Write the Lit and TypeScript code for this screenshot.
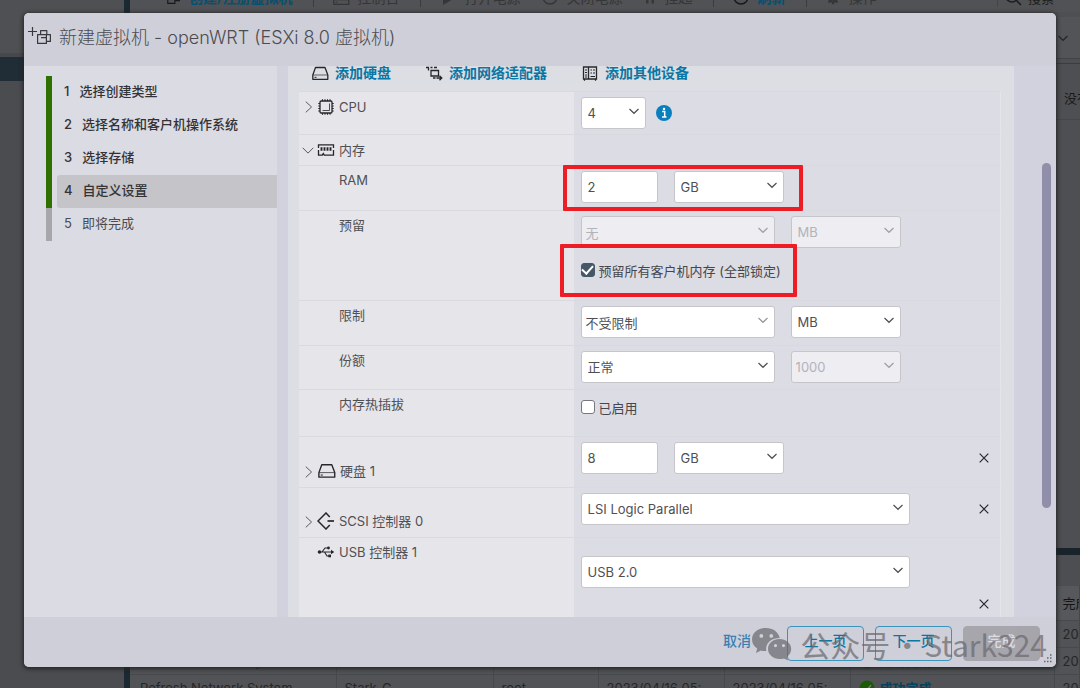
import { LitElement, html, css, svg, nothing } from "lit";
import { customElement, property } from "lit/decorators.js";
import { classMap } from "lit/directives/class-map.js";

const icons: Record<string, unknown> = {
  disk: svg`<path d="M4.5 3.5h9.5l2.800 7.500v4.300h-15V11z" fill="none" stroke="currentColor" stroke-width="1.300" stroke-linejoin="round"/><path d="M2 11h14.500" stroke="currentColor" stroke-width=".7"/><path d="M3.500 13.300h2" stroke="currentColor" stroke-width="1"/>`,
  network: svg`<path d="M1 3.500h3M5.500 3.500h2M9 3.500h3M6 6.500h7.500v5.500H6zM3.500 3.500v3M8 14h2.500M11.500 14h5M14.500 11.800l2.300 2.200-2.300 2.200" fill="none" stroke="currentColor" stroke-width="1.300"/>`,
  device: svg`<path d="M2.500 3h13v12h-13zM7.500 3v12" fill="none" stroke="currentColor" stroke-width="1.300"/><path d="M4 6h2M4 8.500h2M4 11h2M4 13h2M9.500 6h1.500M12 6h2M9.500 9h1.500M12 9h2M9.500 12.500h4.500M3.500 15v1.800M14.500 15v1.800" stroke="currentColor" stroke-width="1.200"/>`,
  cpu: svg`<rect x="3" y="3" width="12" height="12" rx="1.200" fill="none" stroke="currentColor" stroke-width="1.300"/><path d="M5.500 12.500h7v-7" fill="none" stroke="currentColor" stroke-width=".8"/><path d="M5.500 1.300V3M8 1.300V3M10.500 1.300V3M13 1.300V3M5.500 15v1.700M8 15v1.700M10.500 15v1.700M13 15v1.700M1.300 5.500H3M1.300 8H3M1.300 10.500H3M1.300 13H3M15 5.500h1.700M15 8h1.700M15 10.500h1.700M15 13h1.700" stroke="currentColor" stroke-width="1.100"/>`,
  memory: svg`<path d="M1.500 7V3.800h15V7M1.500 9v5.200h3.800l1-1.600 1 1.600h9.200V9" fill="none" stroke="currentColor" stroke-width="1.300"/><path d="M4.500 6.200v3.600M7.500 6.200v3.600M10.500 6.200v3.600M13.500 6.200v3.600" stroke="currentColor" stroke-width="1.900"/>`,
  scsi: svg`<path d="M12.800 5L9 1 1 9l8 8 3.800-4" fill="none" stroke="currentColor" stroke-width="1.500"/><path d="M10.500 9H17" stroke="currentColor" stroke-width="1.700"/>`,
  usb: svg`<circle cx="2.500" cy="9" r="1.800" fill="currentColor"/><path d="M2.500 9h12M5 9l3-4h3M7.500 9l2.500 4h2" fill="none" stroke="currentColor" stroke-width="1.100"/><path d="M14 6.800L17.300 9 14 11.200z" fill="currentColor"/><circle cx="11.500" cy="5" r="1.400" fill="currentColor"/><path d="M11.300 11.600h2.700v2.700h-2.700z" fill="currentColor"/>`,
  vm: svg`<path d="M2 6h8v9H2zM6 9V3h9v9H10M10 9h2" fill="none" stroke="currentColor" stroke-width="1.300"/>`,
  close: svg`<path d="M4.700 4.700l8.600 8.600M13.300 4.700l-8.600 8.600" stroke="currentColor" stroke-width="1.200"/>`,
  down: svg`<path d="M4.500 7l4.500 4.300L13.500 7" fill="none" stroke="currentColor" stroke-width="1.200"/>`,
  expand: svg`<path d="M6.500 3L13 9l-6.500 6" fill="none" stroke="currentColor" stroke-width="1.100"/>`,
  collapse: svg`<path d="M3 6.500L9 12.500l6-6" fill="none" stroke="currentColor" stroke-width="1.100"/>`,
  info: svg`<circle cx="9" cy="9" r="8" fill="#0a7fbe"/><path d="M7.200 7.600h2.500v5M7 13h4.500" fill="none" stroke="#fff" stroke-width="1.500"/><circle cx="9" cy="4.900" r="1.200" fill="#fff"/>`,
  refresh: svg`<path d="M2 8a7 7 0 0 0 14 0" fill="none" stroke="currentColor" stroke-width="1.500"/>`,
  gear: svg`<circle cx="9" cy="9" r="4" fill="none" stroke="currentColor" stroke-width="3"/><path d="M9 2v3M9 13v3M2 9h3M13 9h3M4 4l2 2M12 12l2 2M14 4l-2 2M6 12l-2 2" stroke="currentColor" stroke-width="2.400"/>`,
  search: svg`<circle cx="8" cy="7" r="6" fill="none" stroke="currentColor" stroke-width="1.600"/><path d="M12.500 11.500L17 16" stroke="currentColor" stroke-width="1.600"/>`,
  play: svg`<path d="M4 2l12 7-12 7z" fill="currentColor"/>`,
  pause: svg`<path d="M4 2h3v14H4zM11 2h3v14h-3z" fill="currentColor"/>`,
  ok: svg`<circle cx="9" cy="9" r="8.500" fill="#1d5a08"/><path d="M4.500 9.500l3 3 6-6.500" fill="none" stroke="#77797b" stroke-width="1.700"/>`,
};

const icon = (name: string, size = 18, cls = "") =>
  html`<svg class=${cls} width=${size} height=${size} viewBox="0 0 18 18" aria-hidden="true">${icons[name]}</svg>`;

const shared = css`
  * { box-sizing: border-box; }
  svg { display: block; flex: none; }
  button { font: inherit; color: inherit; background: none; border: 0; padding: 0; cursor: pointer; }
  a { color: inherit; text-decoration: none; }
`;

@customElement("host-client")
class HostClient extends LitElement {
  static styles = [shared, css`
    :host { display: flex; height: 100%; overflow: hidden; background: #4e4f52; color: #252628; font-size: 13px; line-height: 18px; white-space: nowrap; }
    .nav { flex: none; width: 130px; border-right: 6px solid #1b2932; background: #4b4c50; }
    .nav-head { height: 57px; background: #4f5053; border-bottom: 4px solid #47484b; }
    .nav-active { height: 24px; background: #202c36; }
    .main { flex: 1; min-width: 0; display: flex; flex-direction: column; }
    .bar { display: flex; align-items: center; height: 28px; margin-top: -16px; padding-left: 36px; background: #515255; font-size: 14px; }
    .tool { display: flex; align-items: center; gap: 7px; padding-right: 21px; }
    .tool.lined { border-right: 1px solid #3a3b3d; margin-right: 18px; }
    .tool.blue { color: #07506f; font-weight: 700; }
    .tool.blue svg { color: #18191b; }
    .tool.off { color: #353638; }
    .find { margin-left: auto; width: 83px; padding-left: 6px; display: flex; align-items: center; gap: 6px; color: #1d1e20; border-left: 1px solid #444547; font-size: 13px; }
    .crumbs { height: 42px; margin-top: 5px; display: flex; justify-content: flex-end; align-items: center; padding-right: 8px; border-bottom: 1px solid #424346; background: #535457; }
    .notice { margin-top: 4px; height: 57px; text-align: right; padding: 25px 0 0; border-top: 1px solid #3b3c3f; border-bottom: 1px solid #46474a; overflow: hidden; }
    .notice span { display: block; width: 16px; margin-left: auto; color: #18191a; }
    .body { flex: 1; }
    .tasks-head { height: 38px; border-top: 7px solid #18232b; background: #4d4e51; }
    .tasks { width: 100%; border-collapse: collapse; table-layout: fixed; margin-bottom: -14px; }
    .tasks td, .tasks th { height: 27px; padding: 0 8px; border-right: 1px solid #47484b; border-bottom: 1px solid #48494c; font-weight: 400; text-align: left; overflow: hidden; }
    .tasks th { height: 35px; background: #57585b; color: #141516; }
    .tasks td { background: #525356; }
    .tasks .name { width: 206px; padding-left: 10px; }
    .tasks .target { width: 157px; }
    .tasks .user { width: 105px; }
    .tasks .date { width: 126px; }
    .tasks .state { width: 204px; padding-left: 8px; }
    .status { display: flex; align-items: center; gap: 5px; color: #07425c; font-weight: 700; }
  `];

  private row() {
    return html`<tr><td class="name">Refresh Network System</td><td>Stark-C</td><td>root</td><td>2023/04/16 05:</td><td>2023/04/16 05:</td>
      <td class="state"><span class="status">${icon("ok", 16)}成功完成</span></td><td>2023/04/16</td></tr>`;
  }

  render() {
    return html`
      <div class="nav"><div class="nav-head"></div><div class="nav-active"></div></div>
      <div class="main">
        <div class="bar">
          <span class="tool lined blue">${icon("vm", 16)}创建/注册虚拟机</span>
          <span class="tool lined off">${icon("disk")}控制台</span>
          <span class="tool off">${icon("play", 18)}打开电源</span>
          <span class="tool off">${icon("refresh")}关闭电源</span>
          <span class="tool lined off">${icon("pause", 14)}挂起</span>
          <span class="tool lined blue">${icon("refresh")}刷新</span>
          <span class="tool off">${icon("gear", 16)}操作</span>
          <span class="find">${icon("search")}搜索</span>
        </div>
        <div class="crumbs">${icon("down")}</div>
        <div class="notice"><span>没有</span></div>
        <div class="body"></div>
        <div class="tasks-head"></div>
        <table class="tasks">
          <thead><tr><th class="name"></th><th class="target"></th><th class="user"></th><th class="date"></th><th class="date"></th><th class="state"></th><th>完成</th></tr></thead>
          <tbody>${[0, 1, 2].map(() => this.row())}</tbody>
        </table>
      </div>`;
  }
}

@customElement("wizard-steps")
class WizardSteps extends LitElement {
  @property({ type: Number }) current = 4;

  static styles = [shared, css`
    :host { display: block; background: #dbdbe3; padding: 10px 0 0 22px; }
    .list { list-style: none; margin: 0; padding: 0; }
    .item { height: 33px; border-left: 6px solid #a7a7ab; padding-left: 5px; }
    .done { border-color: #2f7000; }
    .link { display: flex; align-items: center; gap: 10px; width: 100%; height: 33px; padding: 0 0 3px 7px; border-radius: 3px 0 0 3px; color: #4c4c50; text-align: left; }
    .done .link { color: #333336; font-weight: 500; }
    .current .link { background: #c4c4c9; }
  `];

  render() {
    const steps = ["选择创建类型", "选择名称和客户机操作系统", "选择存储", "自定义设置", "即将完成"];
    return html`<ol class="list">${steps.map((text, i) => html`
      <li class=${classMap({ item: true, done: i < this.current, current: i + 1 === this.current })}>
        <button class="link"><span>${i + 1}</span><span>${text}</span></button>
      </li>`)}</ol>`;
  }
}

@customElement("hardware-form")
class HardwareForm extends LitElement {
  static styles = [shared, css`
    :host { display: block; overflow: hidden; background: #dddde4; padding: 0 13px 0 11px; color: #505054; }
    .add { display: flex; height: 25px; padding: 0 0 12px 12px; gap: 34px; align-items: center; color: #0a76a3; font-size: 14px; line-height: 18px; font-weight: 700; }
    .add a { display: flex; align-items: center; gap: 6px; }
    .add svg, .name svg { color: #26272a; }
    .row { display: grid; grid-template-columns: minmax(0, 275fr) minmax(0, 427fr); border-top: 1px solid #d9d9e0; border-right: 1px solid #e5e4ea; min-height: 45px; }
    .row.short { min-height: 31px; }
    .row.cpu { min-height: 43px; }
    .row.slim { min-height: 44px; }
    .row.check-row { min-height: 47px; }
    .row.tall { min-height: 90px; }
    .row.large { min-height: 50px; }
    .row.drive { min-height: 51px; }
    .row.last { min-height: 80px; }
    .name { display: flex; align-items: flex-start; padding: 4px 0 5px 40px; background: #e6e5ea; line-height: 20px; }
    .name.head { gap: 1px; padding: 5px 0 4px 1px; }
    .name.head svg { margin-top: 1px; }
    .name.head svg:first-child { margin-top: 2px; color: #55565a; }
    .name.head label, .name.head span { margin-left: 3px; }
    .name.low { align-items: flex-end; padding-bottom: 6px; }
    .name.low svg, .name.low svg:first-child { margin-bottom: 1px; }
    .name.plain { padding: 4px 0 5px 18px; gap: 4px; }
    .name.plain svg { margin-top: 1px; }
    .value { position: relative; display: flex; flex-direction: column; gap: 13px; padding: 5px 4px 4px 7px; background: #dcdce5; }
    .line { display: flex; align-items: center; gap: 16px; }
    .near { gap: 9px; }
    .check { display: flex; align-items: center; gap: 4px; line-height: 20px; color: #47474b; }
    .check.first { padding-top: 3px; }
    .box { appearance: none; width: 14px; height: 14px; margin: 0; border: 1px solid #77777c; border-radius: 3px; background: #fff; display: grid; place-items: center; margin-bottom: 3px; }
    .box:checked { background: #465866; border-color: #465866; }
    .box:checked::after { content: ""; width: 5px; height: 9px; margin-top: -2px; border: solid #fff; border-width: 0 2px 2px 0; transform: rotate(42deg); }
    .field, .pick > select, .pick > input { font: inherit; color: #505054; height: 32px; border: 1px solid #c5c5ca; border-radius: 3px; background: #fff; padding: 0 6px 1px; outline: 0; }
    .field { width: 77px; }
    .pick { display: grid; width: 110px; color: #505054; }
    .pick > * { grid-area: 1 / 1; }
    .pick > select, .pick > input { appearance: none; width: 100%; min-width: 0; opacity: 1; }
    .pick > svg { justify-self: end; align-self: start; margin: 5px 3px 0 0; pointer-events: none; }
    .pick > input { padding: 0 4px; }
    .pick > input + svg { color: #98989d; }
    .pick > :disabled { background: #ededf2; color: #b3b3b9; }
    .pick > :disabled + svg { color: #a0a0a6; }
    .tiny { width: 65px; }
    .wide { width: 194px; }
    .full { width: 329px; }
    .remove { display: grid; place-items: center; width: 24px; height: 24px; margin-left: auto; color: #27282b; }
    .usb { padding-top: 18px; gap: 4px; }
    .mark { position: absolute; border: 4px solid #ee1c25; border-radius: 1px; pointer-events: none; }
    .mark.ram { top: -1px; left: -11px; width: 240px; height: 46px; }
    .mark.lock { top: 33px; left: -14px; width: 237px; height: 53px; }
  `];

  private pick(id: string, value: string, size = "", disabled = false, label = "") {
    return html`<span class="pick ${size}"><select id=${id} aria-label=${label || nothing} ?disabled=${disabled}><option>${value}</option></select>${icon("down")}</span>`;
  }

  private combo(id: string, value: string, size = "", disabled = false, label = "") {
    return html`<span class="pick ${size}"><input id=${id} aria-label=${label || nothing} .value=${value} ?disabled=${disabled}>${icon("down")}</span>`;
  }

  private remove(label: string) {
    return html`<button class="remove" aria-label=${label}>${icon("close")}</button>`;
  }

  render() {
    return html`
      <div class="add">
        <a href="#disk">${icon("disk")}添加硬盘</a>
        <a href="#network">${icon("network")}添加网络适配器</a>
        <a href="#device">${icon("device")}添加其他设备</a>
      </div>
      <div class="row cpu">
        <div class="name head">${icon("expand", 16)}${icon("cpu")}<label for="cpu">CPU</label></div>
        <div class="value"><div class="line near">${this.pick("cpu", "4", "tiny")}${icon("info")}</div></div>
      </div>
      <div class="row short">
        <div class="name head">${icon("collapse", 16)}${icon("memory")}<span>内存</span></div>
        <div class="value"></div>
      </div>
      <div class="row">
        <div class="name"><label for="ram">RAM</label></div>
        <div class="value">
          <div class="line"><input class="field" id="ram" .value=${"2"}>${this.pick("ram-unit", "GB", "", false, "RAM GB")}</div>
          <div class="mark ram"></div>
        </div>
      </div>
      <div class="row tall">
        <div class="name"><label for="reserve">预留</label></div>
        <div class="value">
          <div class="line">${this.combo("reserve", "无", "wide", true)}${this.pick("reserve-unit", "MB", "", true, "预留 MB")}</div>
          <label class="check"><input class="box" type="checkbox" checked>预留所有客户机内存 (全部锁定)</label>
          <div class="mark lock"></div>
        </div>
      </div>
      <div class="row">
        <div class="name"><label for="limit">限制</label></div>
        <div class="value"><div class="line">${this.combo("limit", "不受限制", "wide")}${this.pick("limit-unit", "MB", "", false, "限制 MB")}</div></div>
      </div>
      <div class="row slim">
        <div class="name"><label for="shares">份额</label></div>
        <div class="value"><div class="line">${this.pick("shares", "正常", "wide")}${this.combo("shares-value", "1000", "", true, "份额")}</div></div>
      </div>
      <div class="row check-row">
        <div class="name"><label for="hotplug">内存热插拔</label></div>
        <div class="value"><label class="check first"><input class="box" id="hotplug" type="checkbox">已启用</label></div>
      </div>
      <div class="row drive">
        <div class="name head low">${icon("expand", 16)}${icon("disk", 19)}<label for="hdd">硬盘 1</label></div>
        <div class="value"><div class="line"><input class="field" id="hdd" .value=${"8"}>${this.pick("hdd-unit", "GB", "", false, "硬盘 1 GB")}${this.remove("硬盘 1")}</div></div>
      </div>
      <div class="row large">
        <div class="name head low">${icon("expand", 16)}${icon("scsi")}<label for="scsi">SCSI 控制器 0</label></div>
        <div class="value"><div class="line">${this.pick("scsi", "LSI Logic Parallel", "full")}${this.remove("SCSI 控制器 0")}</div></div>
      </div>
      <div class="row last">
        <div class="name plain">${icon("usb")}<label for="usb">USB 控制器 1</label></div>
        <div class="value usb">${this.pick("usb", "USB 2.0", "full")}${this.remove("USB 控制器 1")}</div>
      </div>`;
  }
}

@customElement("app-root")
class AppRoot extends LitElement {
  static styles = [shared, css`
    :host { display: block; position: relative; height: 100vh; overflow: hidden; font: 400 13px/18px Inter, "Noto Sans CJK SC", sans-serif; }
    .dialog { position: absolute; inset: 13px 24px 21px; display: flex; flex-direction: column; background: #d2d2de; border-radius: 5px; overflow: hidden; box-shadow: 0 1px 4px 1px #222426; }
    .top { display: flex; align-items: center; gap: 7px; height: 53px; padding: 0 4px 4px; background: #cfcfd9; color: #4c4c50; }
    .top svg { color: #38393c; }
    .title { margin: 0; font-size: 18px; line-height: 24px; font-weight: 300; }
    .content { flex: 1; min-height: 0; display: flex; }
    .content wizard-steps { flex: none; width: 253px; margin-right: 11px; }
    .content hardware-form { flex: 1; min-width: 0; }
    .scroll { flex: none; width: 42px; padding: 97px 5px 109px 28px; display: flex; }
    .thumb { flex: 1; border-radius: 5px; background: #908fa9; }
    .foot { position: relative; display: flex; justify-content: flex-end; align-items: center; gap: 11px; height: 50px; padding: 2px 16px 0 0; background: #cfcfd9; font-size: 14px; }
    .btn { width: 77px; height: 35px; padding-bottom: 4px; border: 1px solid #3a94bb; border-radius: 4px; color: #0a76a3; font-weight: 500; }
    .btn.cancel { width: 28px; border: 0; margin-right: 25px; white-space: nowrap; color: #3a7fb0; }
    .btn.finish { background: #a6a6ac; border-color: #a6a6ac; color: #dcdce2; }
    .stamp { position: absolute; right: 9px; top: 5px; display: flex; align-items: center; gap: 2px; font: 400 30px/44px "Noto Sans CJK SC", sans-serif; color: #68686e; opacity: .7; pointer-events: none; white-space: nowrap; }
    .stamp svg { margin-right: 6px; }
    .grip { position: absolute; right: 3px; bottom: 3px; }
  `];

  render() {
    return html`
      <host-client></host-client>
      <section class="dialog" role="dialog" aria-labelledby="title">
        <header class="top">
          <svg width="24" height="24" viewBox="0 0 24 24" aria-hidden="true"><path d="M0 5.500h9M4.500 1v9" stroke="currentColor" stroke-width="1.200"/><path d="M9.600 8.600h8.800v8.800H9.600zM12.600 8.600V4.600h6.200v4M18.400 8.600h4v6.800h-4M13 11.600h5.400" fill="none" stroke="currentColor" stroke-width="1.200" stroke-linejoin="round"/></svg>
          <h1 class="title" id="title">新建虚拟机 - openWRT (ESXi 8.0 虚拟机)</h1>
        </header>
        <div class="content">
          <wizard-steps .current=${4}></wizard-steps>
          <hardware-form></hardware-form>
          <div class="scroll"><div class="thumb"></div></div>
        </div>
        <footer class="foot">
          <button class="btn cancel">取消</button>
          <button class="btn">上一页</button>
          <button class="btn">下一页</button>
          <button class="btn finish" disabled>完成</button>
          <div class="stamp">
            <svg width="41" height="34" viewBox="0 0 41 34" aria-hidden="true">
              <path fill="currentColor" fill-rule="evenodd" d="M15 1C7 1 1 6 1 12.500c0 3.800 2 7 5.200 9L5 26l5-2.600c1.600.5 3.400.8 5.300.7C14 16.500 20 11 28.700 11 27.500 5 22 1 15 1zM10.300 7a1.900 1.900 0 1 1 0 3.800 1.900 1.900 0 0 1 0-3.800zm10 0a1.900 1.900 0 1 1 0 3.800 1.900 1.900 0 0 1 0-3.800z"/>
              <path fill="currentColor" fill-rule="evenodd" d="M28.500 12C21.700 12 17 16.500 17 22s5 10 11.700 10c1.500 0 2.900-.2 4.200-.6l4.100 2.200-1.100-3.800c2.600-1.900 4.300-4.600 4.300-7.800 0-5.500-5-10-11.700-10zM24.500 17a1.600 1.600 0 1 1 0 3.200 1.600 1.600 0 0 1 0-3.200zm8 0a1.600 1.600 0 1 1 0 3.200 1.600 1.600 0 0 1 0-3.200z"/>
            </svg>
            <span>公众号</span>
            <span>·</span>
            <span>Stark324</span>
          </div>
          <svg class="grip" width="10" height="10" viewBox="0 0 10 10" aria-hidden="true"><path d="M7 1h1.500M4 4h1.500M7 4h1.500M1 7.500h1.500M4 7.500h1.500M7 7.500h1.500" stroke="#66666b" stroke-width="1.500"/></svg>
        </footer>
      </section>`;
  }
}
